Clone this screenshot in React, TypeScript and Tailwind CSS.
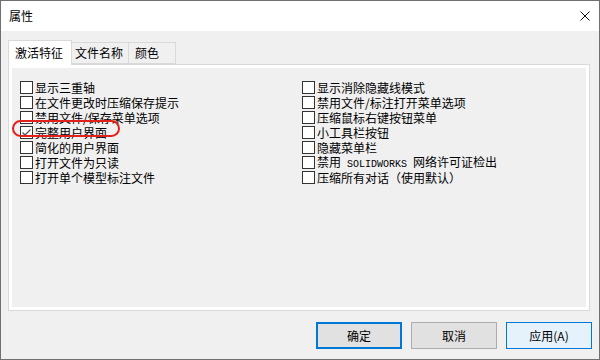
import React from "react";

const FONT = { fontFamily: '"Noto Sans CJK SC", "Noto Sans", sans-serif' };

const leftItems = [
  { label: "显示三重轴" },
  { label: "在文件更改时压缩保存提示" },
  { label: "禁用文件/保存菜单选项" },
  { label: "完整用户界面", checked: true, circled: true },
  { label: "简化的用户界面" },
  { label: "打开文件为只读" },
  { label: "打开单个模型标注文件" },
];

const rightItems: { label: React.ReactNode }[] = [
  { label: "显示消除隐藏线模式" },
  { label: "禁用文件/标注打开菜单选项" },
  { label: "压缩鼠标右键按钮菜单" },
  { label: "小工具栏按钮" },
  { label: "隐藏菜单栏" },
  {
    label: (
      <>
        禁用
        <span className="text-[10px] font-['Liberation_Mono',monospace] whitespace-pre">
          {" SOLIDWORKS "}
        </span>
        网络许可证检出
      </>
    ),
  },
  { label: "压缩所有对话（使用默认）" },
];

function CheckRow({
  label,
  checked,
  circled,
}: {
  label: React.ReactNode;
  checked?: boolean;
  circled?: boolean;
}) {
  return (
    <div className="relative flex h-[15px] items-center">
      <div className="flex h-[13px] w-[13px] shrink-0 items-center justify-center border border-[#333333] bg-white">
        {checked && (
          <svg width="11" height="11" viewBox="0 0 11 11">
            <polyline
              points="1.5,5.5 4,8 9.5,2.5"
              fill="none"
              stroke="#555555"
              strokeWidth="1.3"
            />
          </svg>
        )}
      </div>
      <span className="ml-[2px] whitespace-nowrap text-[12px] leading-[15px] text-black">
        {label}
      </span>
      {circled && (
        <div className="pointer-events-none absolute left-[-8px] top-[-5px] h-[17px] w-[108px] rounded-[9px] border-2 border-[#e3211c]" />
      )}
    </div>
  );
}

export default function App() {
  return (
    <div
      className="flex h-[360px] w-[600px] flex-col border border-[#707070] bg-[#f0f0f0] text-black"
      style={FONT}
    >
      {/* 标题栏 */}
      <div className="flex h-[30px] items-center justify-between bg-white pl-[8px] pr-[9px]">
        <span className="text-[12px]">属性</span>
        <svg width="10" height="10" viewBox="0 0 10 10">
          <path d="M0.5 0.5 L9.5 9.5 M9.5 0.5 L0.5 9.5" stroke="#111" strokeWidth="1" />
        </svg>
      </div>

      <div className="flex flex-1 flex-col px-[7px] pt-[9px]">
        {/* 标签页 */}
        <div className="flex items-end">
          <div className="relative z-10 -mb-px flex h-[25px] w-[64px] items-center border border-b-0 border-[#d9d9d9] bg-white pb-px pl-[6px] text-[12px]">
            激活特征
          </div>
          <div className="flex h-[22px] w-[57px] items-center border border-l-0 border-[#d9d9d9] pl-[3px] text-[12px]">
            文件名称
          </div>
          <div className="flex h-[22px] w-[47px] items-center border border-l-0 border-[#d9d9d9] pl-[6px] text-[12px]">
            颜色
          </div>
        </div>

        {/* 面板 */}
        <div className="h-[247px] w-[582px] border border-[#d9d9d9] bg-white p-[3px]">
          <div className="grid h-full grid-cols-[282px_1fr] bg-[#f0f0f0] pl-[8px] pt-[12px]">
            <div className="flex flex-col">
              {leftItems.map((it, i) => (
                <CheckRow key={i} {...it} />
              ))}
            </div>
            <div className="flex flex-col">
              {rightItems.map((it, i) => (
                <CheckRow key={i} label={it.label} />
              ))}
            </div>
          </div>
        </div>

        {/* 按钮 */}
        <div className="mt-[11px] flex justify-end gap-[9px]">
          <button className="flex h-[27px] w-[86px] items-center justify-center border-2 border-[#0078d7] bg-[#e1e1e1] text-[12px]">
            确定
          </button>
          <button className="flex h-[27px] w-[86px] items-center justify-center border border-[#adadad] bg-[#e1e1e1] text-[12px]">
            取消
          </button>
          <button className="flex h-[27px] w-[86px] items-center justify-center border border-[#0078d7] bg-[#e5f1fb] text-[12px]">
            应用(A)
          </button>
        </div>
      </div>
    </div>
  );
}
